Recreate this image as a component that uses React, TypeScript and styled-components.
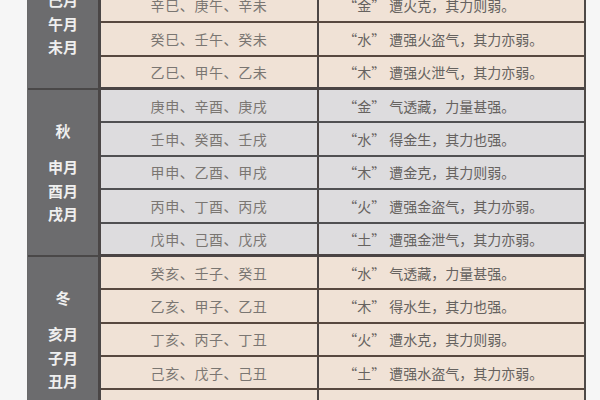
import styled, { createGlobalStyle } from "styled-components";

const GlobalStyle = createGlobalStyle`
  html, body {
    margin: 0;
    padding: 0;
    height: 400px;
    overflow: hidden;
    background: #f6f6f6;
  }
`;

type Tone = "warm" | "cool";

interface Season {
  name: string;
  months: string[];
  tone: Tone;
  rows: [string, string, string][];
}

// each row: stems, element, remark
const SEASONS: Season[] = [
  {
    name: "夏",
    months: ["巳月", "午月", "未月"],
    tone: "warm",
    rows: [
      ["丁巳、丙午、丁未", "火", "气透藏，力量甚强。"],
      ["己巳、戊午、己未", "土", "得火生，其力也强。"],
      ["辛巳、庚午、辛未", "金", "遭火克，其力则弱。"],
      ["癸巳、壬午、癸未", "水", "遭强火盗气，其力亦弱。"],
      ["乙巳、甲午、乙未", "木", "遭强火泄气，其力亦弱。"],
    ],
  },
  {
    name: "秋",
    months: ["申月", "酉月", "戌月"],
    tone: "cool",
    rows: [
      ["庚申、辛酉、庚戌", "金", "气透藏，力量甚强。"],
      ["壬申、癸酉、壬戌", "水", "得金生，其力也强。"],
      ["甲申、乙酉、甲戌", "木", "遭金克，其力则弱。"],
      ["丙申、丁酉、丙戌", "火", "遭强金盗气，其力亦弱。"],
      ["戊申、己酉、戊戌", "土", "遭强金泄气，其力亦弱。"],
    ],
  },
  {
    name: "冬",
    months: ["亥月", "子月", "丑月"],
    tone: "warm",
    rows: [
      ["癸亥、壬子、癸丑", "水", "气透藏，力量甚强。"],
      ["乙亥、甲子、乙丑", "木", "得水生，其力也强。"],
      ["丁亥、丙子、丁丑", "火", "遭水克，其力则弱。"],
      ["己亥、戊子、己丑", "土", "遭强水盗气，其力亦弱。"],
      ["辛亥、庚子、辛丑", "金", "遭强水泄气，其力亦弱。"],
    ],
  },
];

const Page = styled.div`
  padding: 0 14px 0 27px;
  font-family: "Noto Sans CJK SC", "Noto Sans", sans-serif;
`;

const Table = styled.div`
  width: 559px;
  margin-top: -77px;
  box-sizing: border-box;
  border-left: 1px solid #6a6a6a;
  border-right: 2px solid #4e4a48;
`;

const Section = styled.div`
  display: flex;
`;

const Label = styled.div`
  width: 70px;
  flex-shrink: 0;
  background: #6c6c6e;
  border-right: 3px solid #4a4646;
  border-bottom: 2px solid #4a4848;
  display: flex;
  flex-direction: column;
  align-items: center;
  justify-content: center;
  color: #efefef;
  font-size: 15px;
  font-weight: 700;
  line-height: 23.5px;
`;

const SeasonName = styled.div`
  margin-bottom: 13px;
`;

const Rows = styled.div`
  flex: 1;
  display: flex;
  flex-direction: column;
`;

const Row = styled.div<{ $tone: Tone }>`
  display: grid;
  grid-template-columns: 218px 1fr;
  height: 33.4px;
  box-sizing: border-box;
  background: ${p => (p.$tone === "warm" ? "#f0e2d6" : "#dddcde")};
  border-bottom: 2px solid ${p => (p.$tone === "warm" ? "#57483f" : "#505052")};

  &:last-child {
    border-bottom: 3px solid #4a4444;
  }
`;

const Stems = styled.div`
  display: flex;
  align-items: center;
  justify-content: center;
  border-right: 2px solid #4c4645;
  color: #7a7672;
  font-size: 14px;
  letter-spacing: 0.6px;
`;

const Note = styled.div`
  display: flex;
  align-items: center;
  padding-left: 21px;
  color: #66625f;
  font-size: 14px;
  white-space: pre;
`;

const Element = styled.span`
  margin-right: 4px;
`;

export default function App() {
  return (
    <Page lang="zh-CN">
      <GlobalStyle />
      <Table>
        {SEASONS.map(season => (
          <Section key={season.name}>
            <Label>
              <SeasonName>{season.name}</SeasonName>
              {season.months.map(m => (
                <div key={m}>{m}</div>
              ))}
            </Label>
            <Rows>
              {season.rows.map(([stems, element, remark]) => (
                <Row key={stems} $tone={season.tone}>
                  <Stems>{stems}</Stems>
                  <Note>
                    <Element>{" “" + element + "”"}</Element>
                    {remark}
                  </Note>
                </Row>
              ))}
            </Rows>
          </Section>
        ))}
      </Table>
    </Page>
  );
}
